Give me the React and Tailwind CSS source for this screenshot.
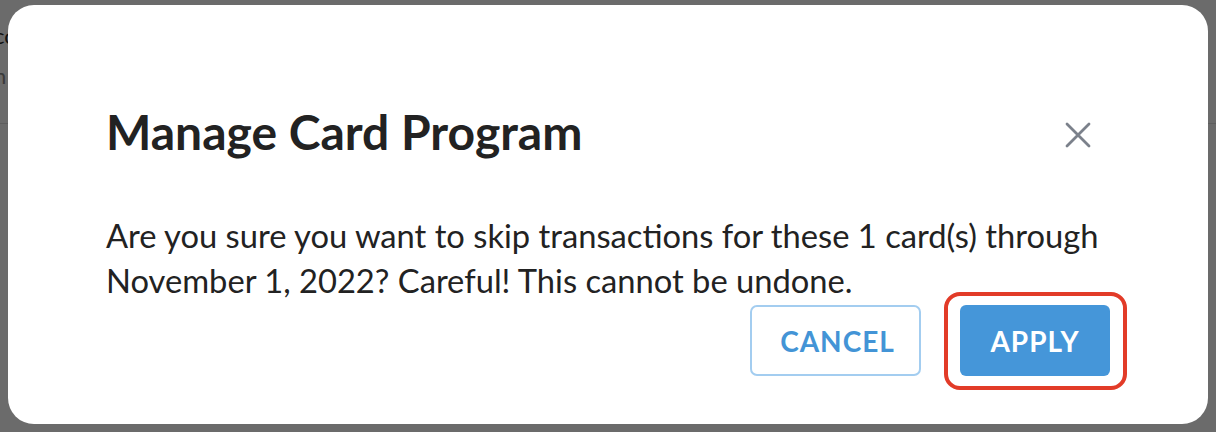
export default function App() {
  return (
    <div className="relative h-[432px] w-[1216px] overflow-hidden bg-[#6b6b6b] font-['Lato','Noto_Sans',sans-serif]">
      {/* page behind the dim layer */}
      <div className="flex h-full flex-col bg-[#6b6b6b]">
        <div className="h-[124px] border-b border-[#5e5e5e] pt-[16px] text-[22px] leading-[40px] text-[#111]">
          <p className="-ml-[6px]">co</p>
          <p className="-ml-[6px] text-[#3a3a3a]">n</p>
        </div>
      </div>

      {/* dialog */}
      <div className="absolute left-[8px] top-[5px] flex h-[419px] w-[1200px] flex-col rounded-[26px] bg-white px-[98px] pt-[99px]">
        <div className="flex items-center justify-between">
          <h2 className="text-[48px] font-bold leading-[56px] text-[#222]">Manage Card Program</h2>
          <button className="mr-[16px] mt-[6px] flex h-[32px] w-[32px] items-center justify-center text-[#7b818b]">
            <svg width="28" height="28" viewBox="0 0 28 28" fill="none" stroke="currentColor" strokeWidth="2.8" strokeLinecap="round">
              <path d="M3 3 L25 25 M25 3 L3 25" />
            </svg>
          </button>
        </div>

        <p className="mt-[53px] text-[32.7px] leading-[45px] text-[#222]">
          Are you sure you want to skip transactions for these 1 card(s) through
          <br />
          November 1, 2022? Careful! This cannot be undone.
        </p>

        <div className="mt-[2px] flex justify-end gap-[39px]">
          <button className="h-[71px] w-[171px] rounded-[7px] border-2 border-[#a3cdf0] bg-white pl-[4px] text-[28px] font-bold tracking-[1px] text-[#4394d6]">
            CANCEL
          </button>
          <div className="relative">
            <span className="absolute -bottom-[14px] -left-[16px] -right-[17px] -top-[13px] rounded-[16px] border-[4px] border-[#e23b28]" />
            <button className="relative h-[71px] w-[150px] rounded-[6px] bg-[#4596d9] text-[28px] font-bold tracking-[1px] text-white">
              APPLY
            </button>
          </div>
        </div>
      </div>
    </div>
  )
}
